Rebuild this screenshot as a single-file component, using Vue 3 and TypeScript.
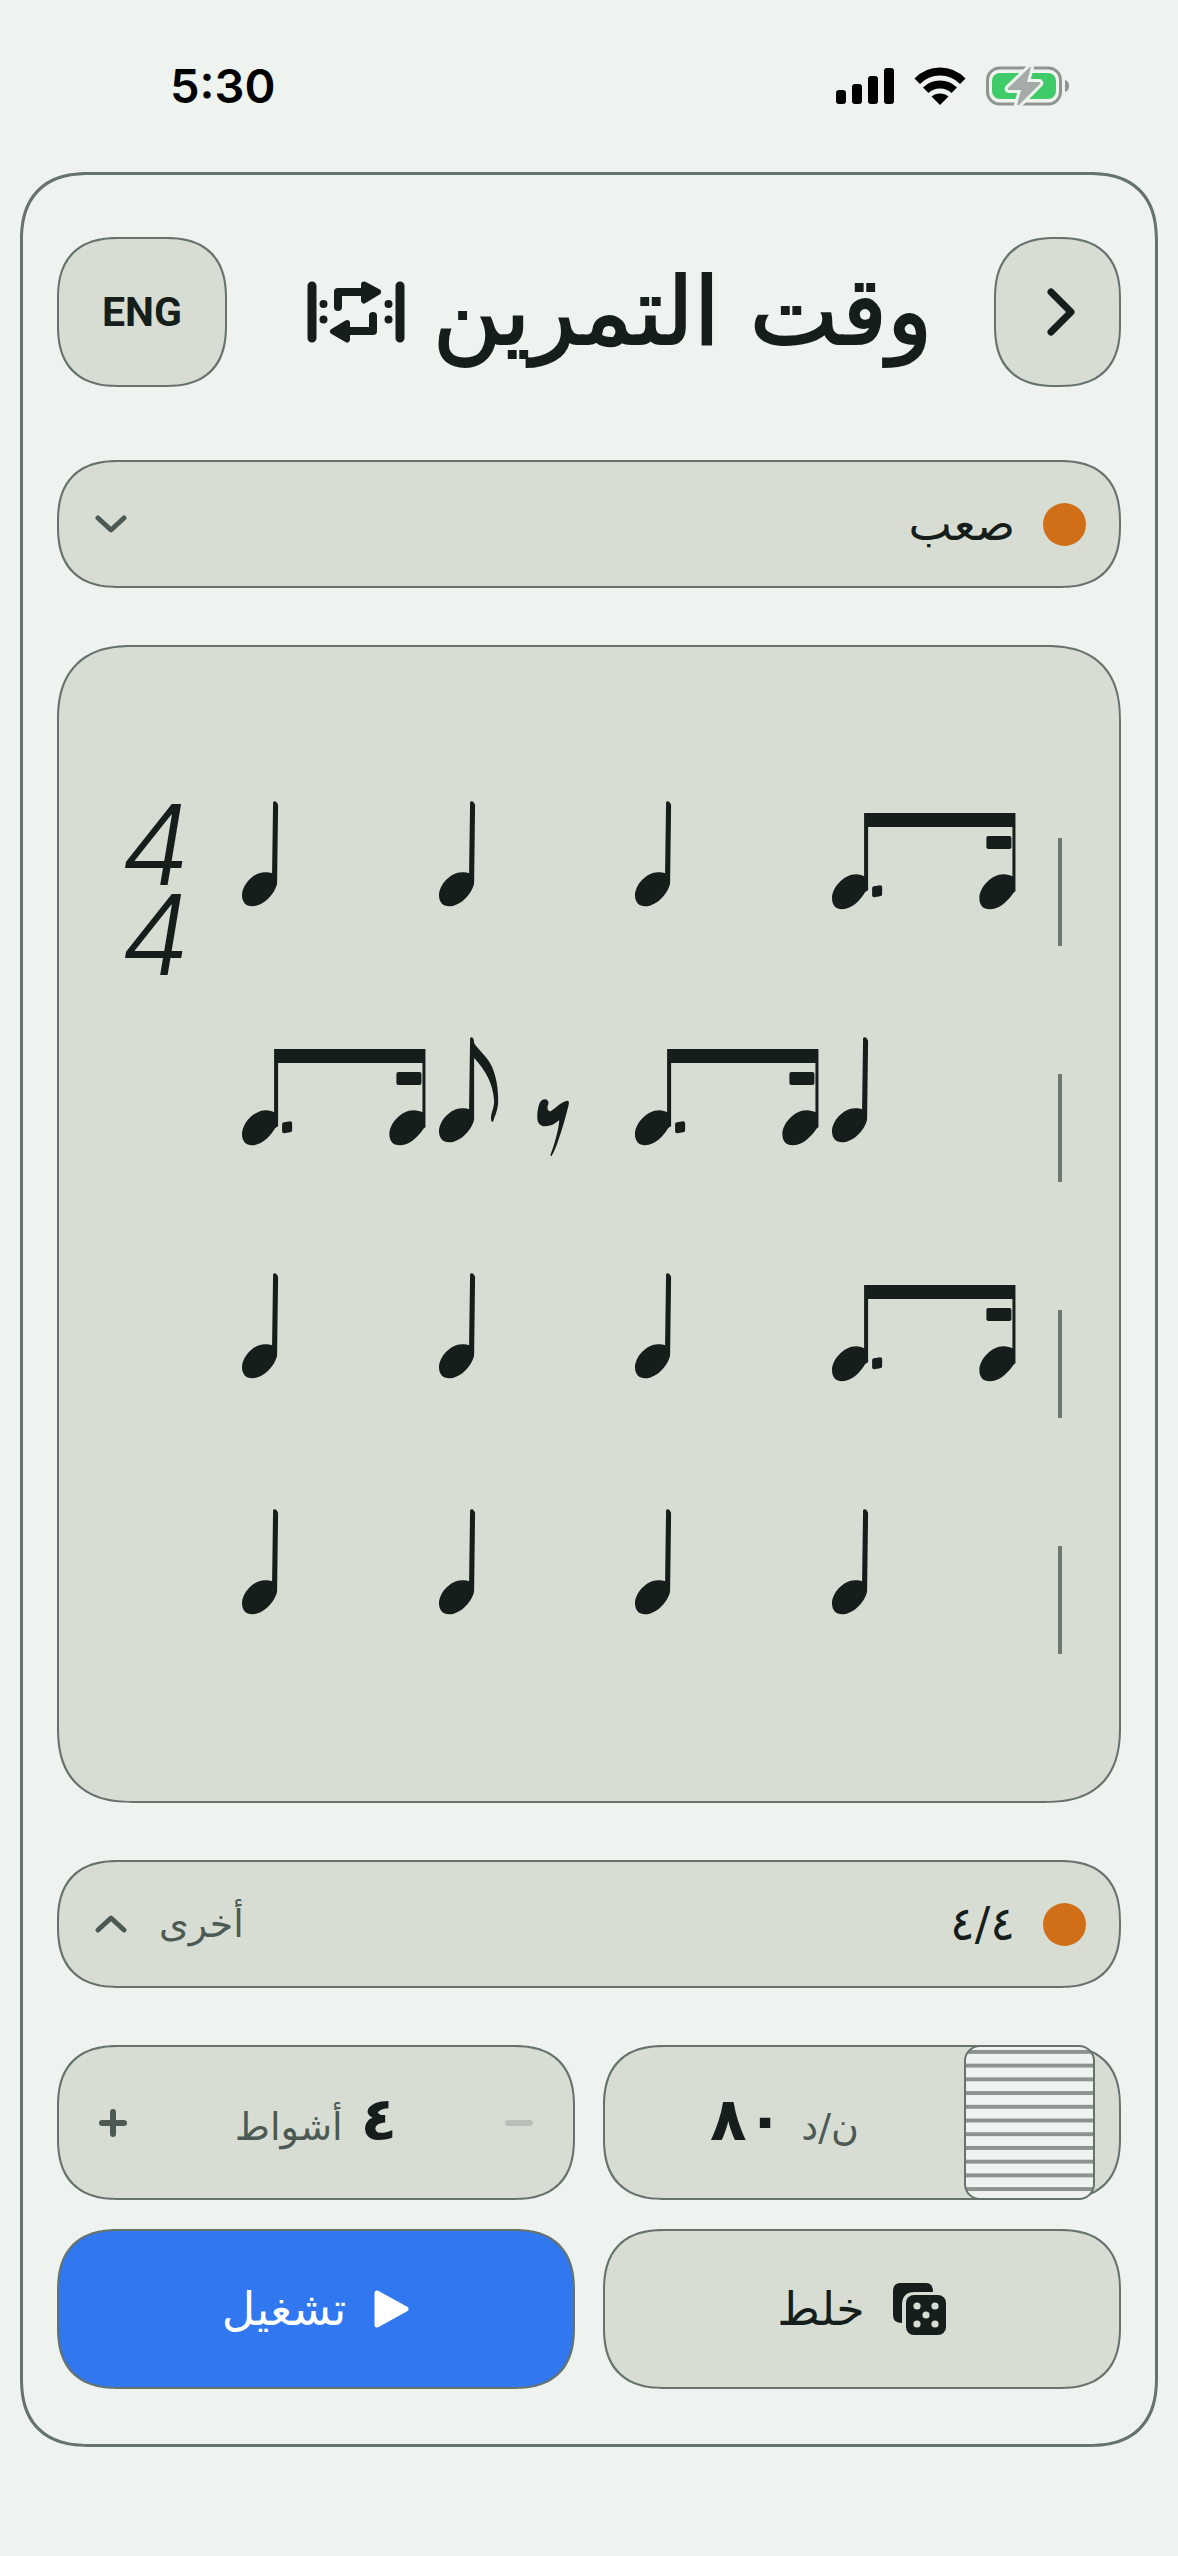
<script setup lang="ts">
import { ref } from 'vue'

type Beat = 'quarter' | 'dotted' | 'eighthRest'

const bars: Beat[][] = [
  ['quarter', 'quarter', 'quarter', 'dotted'],
  ['dotted', 'eighthRest', 'dotted', 'quarter'],
  ['quarter', 'quarter', 'quarter', 'dotted'],
  ['quarter', 'quarter', 'quarter', 'quarter'],
]

const level = ref('hard')
const meter = ref('4/4')
const tempo = ref(80)
const loops = ref(4)

const toArabic = (n: number): string =>
  String(n).replace(/\d/g, (d) => '٠١٢٣٤٥٦٧٨٩'[Number(d)])

const head = 'M35 82C34 90 23 105 10 105C4 105 0 101 0 94C0 84 11 71 23 71C26 71 28 71 30 72'
</script>

<template>
  <div class="app" dir="rtl" lang="ar">
    <div class="status" dir="ltr">
      <span class="clock">5:30</span>
      <div class="status-icons">
        <svg width="58" height="38" viewBox="0 0 58 38">
          <rect x="0" y="23" width="10" height="14" rx="3" />
          <rect x="16" y="17" width="10" height="20" rx="3" />
          <rect x="32" y="9" width="10" height="28" rx="3" />
          <rect x="48" y="1" width="10" height="36" rx="3" />
        </svg>
        <svg width="52" height="38" viewBox="0 0 52 38">
          <path d="M0.500 11.500Q11 .5 26 .5T51.500 11.500L46 17Q38 8.500 26 8.500T6 17Z" />
          <path d="M9 20.500Q16 13.500 26 13.500T43 20.500L37.500 26Q33 21.500 26 21.500T14.500 26Z" />
          <path d="M17.500 29.500Q21 26.500 26 26.500T34.500 29.500L26 38Z" />
        </svg>
        <svg width="84" height="40" viewBox="0 0 84 40">
          <rect x="1.500" y="2" width="73" height="36" rx="12" fill="none" stroke="#8f9692" stroke-width="3" />
          <path d="M79 14q4 1 4 6t-4 6z" fill="#8f9692" />
          <rect x="6" y="7" width="64" height="26" rx="8" fill="#3fcb68" />
          <path d="M44 1L22 22q-1 2 1 2h12L31 39h2L54 18q1-2-1-2H41L45 1z" fill="#a5aca8" stroke="#eef3ef" stroke-width="6" stroke-linejoin="round" />
          <path d="M44 1L22 22q-1 2 1 2h12L31 39h2L54 18q1-2-1-2H41L45 1z" fill="#a5aca8" />
        </svg>
      </div>
    </div>

    <main class="panel">
      <header class="head">
        <button class="box nav" type="button" aria-label="رجوع">
          <svg width="34" height="50" viewBox="0 0 34 50" class="ink-line">
            <path d="M10 5L30 25L10 45" stroke-width="7" />
          </svg>
        </button>
        <h1 class="title">
          <span>وقت التمرين</span>
          <svg width="98" height="62" viewBox="0 0 98 62">
            <g fill="none" stroke="#161e1b" stroke-linecap="round">
              <path d="M5 5V57M93 5V57" stroke-width="9" />
              <path d="M31 26V11H56" stroke-width="8" stroke-linejoin="round" />
              <path d="M66 35V50H42" stroke-width="8" stroke-linejoin="round" />
            </g>
            <g fill="#161e1b" stroke="#161e1b" stroke-width="6" stroke-linejoin="round">
              <path d="M57 3.500L71 11L57 19.500z" />
              <path d="M40 42L26 50.500L40 58.500z" />
            </g>
            <g fill="#161e1b">
              <circle cx="16.500" cy="23" r="4" /><circle cx="16.500" cy="38.500" r="4" />
              <circle cx="81.500" cy="23" r="4" /><circle cx="81.500" cy="38.500" r="4" />
            </g>
          </svg>
        </h1>
        <button class="box lang" type="button" lang="en">ENG</button>
      </header>

      <div class="box picker">
        <span class="dot"></span>
        <select v-model="level" aria-label="المستوى">
          <option value="hard">صعب</option>
        </select>
        <svg width="32" height="18" viewBox="0 0 32 18" class="chevron"><path d="M3 3L16 15L29 3" /></svg>
      </div>

      <section class="box score" dir="ltr">
        <div v-for="(bar, i) in bars" :key="i" class="bar">
          <div class="sig">
            <template v-if="i === 0"><span>4</span><span>4</span></template>
          </div>
          <div class="beats">
            <svg v-for="(beat, j) in bar" :key="j" viewBox="0 0 196 120">
              <path v-if="beat === 'quarter'" :d="head + 'L31 1C33 -1 35 1 36 4Z'" />
              <g v-else-if="beat === 'eighthRest'">
                <path :d="head + 'L31 1C33 -1 35 1 35 6C40 14 48 19 53 30C57 40 59 50 59 64C59 72 56 78 54 84Q53 86 52 83C51 76 55 72 55 64C54 46 46 33 35 21Z'" />
                <path d="M105 62C108 62 110 64 109 67C107 71 109 74 111 74C114 73 120 66 126 64Q131 62 129 69C127 77 123 92 120 100Q116 113 112 119L111 118C114 110 119 95 120 83C117 85 113 89 106 89C101 89 98 86 98 80C98 72 100 62 105 62Z" />
              </g>
              <g v-else>
                <path d="M33 91C29 98 20 108 10 108C4 108 0 104 0 97C0 86 12 73 24 73C28 73 30 74 32 75V12H183V90Q181 91 180 93C175 100 167 108 157 108C151 108 147 104 147 97C147 86 159 73 171 73C175 73 178 74 180 75V26H36V89Q34 90 33 91Z" />
                <rect x="154" y="35" width="25" height="13" rx="2" />
                <path d="M42 85L48 84Q50 84 50 86V93Q50 95 48 95L42 96Q40 96 40 94V87Q40 85 42 85Z" />
              </g>
            </svg>
          </div>
          <div class="barline"></div>
        </div>
      </section>

      <div class="box picker">
        <span class="dot"></span>
        <select v-model="meter" aria-label="الميزان">
          <option value="4/4">٤/٤</option>
        </select>
        <span class="other">أخرى</span>
        <svg width="32" height="18" viewBox="0 0 32 18" class="chevron"><path d="M3 15L16 3L29 15" /></svg>
      </div>

      <div class="grid">
        <div class="box control tempo">
          <input v-model.number="tempo" class="wheel" type="range" min="30" max="240" aria-label="السرعة" />
          <p class="value"><span>ن/د</span><strong>{{ toArabic(tempo) }}</strong></p>
        </div>
        <div class="box control loops">
          <button class="step" type="button" aria-label="إنقاص" disabled>
            <svg width="28" height="28" viewBox="0 0 28 28"><path d="M3 14H25" /></svg>
          </button>
          <p class="value"><strong>{{ toArabic(loops) }}</strong><span>أشواط</span></p>
          <button class="step" type="button" aria-label="زيادة" @click="loops++">
            <svg width="28" height="28" viewBox="0 0 28 28"><path d="M3 14H25M14 3V25" /></svg>
          </button>
        </div>
        <button class="box action" type="button">
          <svg width="54" height="52" viewBox="0 0 54 52">
            <path fill="#161e1b" d="M8 0H33Q40 0 40 9H22Q9 9 9 22V40Q0 40 0 32V8Q0 0 8 0Z" />
            <rect x="13" y="12" width="40" height="40" rx="8" fill="#161e1b" />
            <g fill="#d7ddd3">
              <circle cx="24" cy="23" r="3.600" /><circle cx="42" cy="23" r="3.600" /><circle cx="33" cy="32" r="3.600" />
              <circle cx="24" cy="41" r="3.600" /><circle cx="42" cy="41" r="3.600" />
            </g>
          </svg>
          <span>خلط</span>
        </button>
        <button class="box action play" type="button">
          <svg width="36" height="38" viewBox="0 0 36 38">
            <path d="M3 3V35L32 19Z" fill="#fff" stroke="#fff" stroke-width="5" stroke-linejoin="round" />
          </svg>
          <span>تشغيل</span>
        </button>
      </div>
    </main>
  </div>
</template>

<style>
body {
  background: #eef3ef;
}
</style>

<style scoped>
* {
  box-sizing: border-box;
}
.app {
  min-height: 100vh;
  background: #eef3ef;
  color: #161e1b;
  font-family: 'DejaVu Sans', sans-serif;
}
svg {
  display: block;
  flex: none;
}
button,
select,
input {
  margin: 0;
  padding: 0;
  color: inherit;
  font: inherit;
}
.status {
  display: flex;
  align-items: center;
  justify-content: space-between;
  height: 172px;
  padding: 0 108px 0 170px;
}
.clock {
  color: #000;
  font: 600 47px/58px Inter, sans-serif;
}
.status-icons {
  display: flex;
  align-items: center;
  gap: 20px;
}
.panel {
  margin: 0 20px;
  padding: 62px 34px 55px;
  border: 3px solid #66736c;
  border-radius: 70px;
}
.box {
  border: 2px solid #66736c;
  border-radius: 62px;
  background: #d7ddd3;
}
.panel,
.box {
  corner-shape: superellipse(1.3);
}
.head {
  display: flex;
  align-items: center;
  justify-content: space-between;
  margin-bottom: 73px;
}
.head .box {
  display: flex;
  align-items: center;
  justify-content: center;
  height: 150px;
}
.nav {
  width: 127px;
}
.lang {
  width: 170px;
  font: 700 41px/48px Roboto, sans-serif;
}
.ink-line path {
  fill: none;
  stroke: #161e1b;
  stroke-linecap: round;
  stroke-linejoin: round;
}
.title {
  display: flex;
  align-items: center;
  gap: 28px;
  margin: 0;
  padding-left: 18px;
  font-size: 94px;
  font-weight: 400;
  line-height: 120px;
  white-space: nowrap;
  -webkit-text-stroke: 2px currentColor;
}
.picker {
  display: flex;
  align-items: center;
  height: 128px;
  padding: 0 33px 0 36px;
}
.dot {
  width: 43px;
  height: 43px;
  border-radius: 50%;
  background: #d06f17;
}
.picker select {
  flex: 1;
  height: 124px;
  padding-right: 28px;
  border: 0;
  background: transparent;
  font-size: 46px;
  appearance: none;
}
.other {
  margin-left: 32px;
  color: #4d5a54;
  font-size: 38px;
}
.chevron path {
  fill: none;
  stroke: #4d5a54;
  stroke-width: 5;
  stroke-linecap: round;
  stroke-linejoin: round;
}
.score {
  margin: 57px 0;
  padding: 104px 57px 106px 61px;
  border-radius: 76px;
}
.bar {
  display: flex;
  align-items: flex-start;
  height: 236px;
}
.sig {
  display: flex;
  flex-direction: column;
  width: 122px;
  padding-top: 48px;
  font: italic 300 112px/90px Inter, sans-serif;
}
.beats {
  display: grid;
  flex: 1;
  grid-template-columns: repeat(4, 1fr);
  padding-top: 50px;
}
.beats svg {
  width: 100%;
  overflow: visible;
  fill: #161e1b;
}
.barline {
  width: 34px;
  height: 108px;
  margin-top: 87px;
  border-right: 4px solid #6d7872;
}
.grid {
  display: grid;
  grid-template-columns: 1fr 1fr;
  gap: 29px 28px;
  margin-top: 57px;
}
.control {
  display: flex;
  align-items: center;
  height: 155px;
}
.value {
  display: flex;
  flex: 1;
  align-items: baseline;
  justify-content: center;
  gap: 18px;
  margin: 0;
  line-height: 80px;
}
.value span {
  color: #4d5a54;
  font-size: 38px;
}
.value strong {
  font-size: 60px;
}
.wheel {
  align-self: stretch;
  width: 131px;
  margin: -2px 24px -2px 0;
  border: 2px solid #66736c;
  border-radius: 16px;
  background: linear-gradient(#eef3ef 3px, #8b938e 3px 7px, #eef3ef 7px) 0 0 / 100% 14px round;
  appearance: none;
}
.wheel::-webkit-slider-thumb {
  width: 1px;
  height: 1px;
  appearance: none;
}
.loops {
  padding: 0 40px;
}
.step {
  border: 0;
  background: none;
}
.step path {
  fill: none;
  stroke: #4d5a54;
  stroke-width: 6;
  stroke-linecap: round;
}
.step:disabled path {
  stroke: #b9c0bb;
}
.action {
  display: flex;
  align-items: center;
  justify-content: center;
  gap: 28px;
  height: 160px;
  font-size: 46px;
}
.play {
  background: #3077f0;
  color: #fff;
}
</style>
